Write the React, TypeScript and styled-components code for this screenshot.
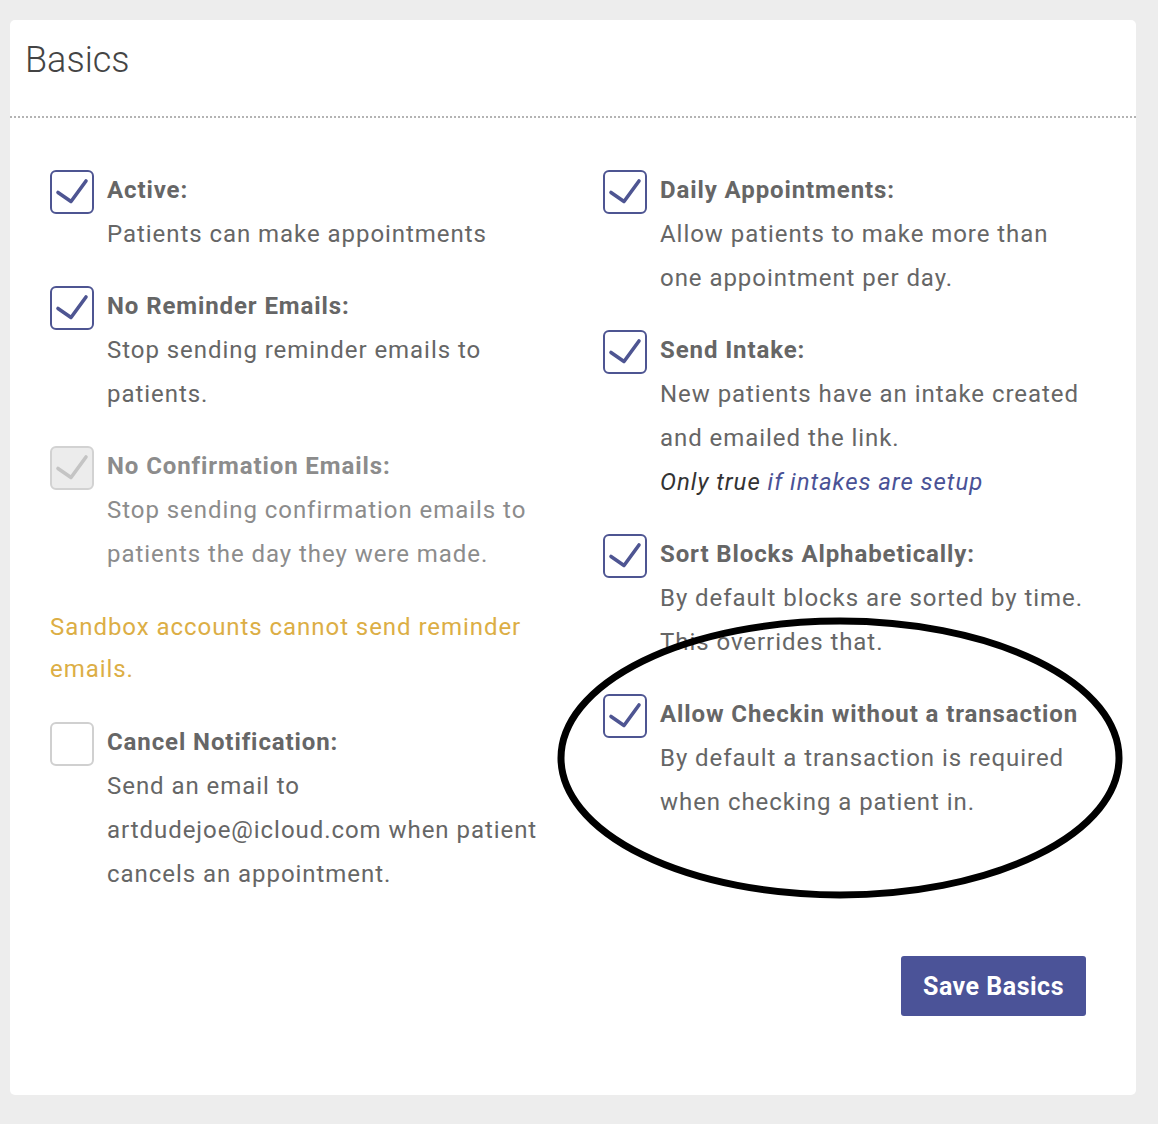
import React from 'react';
import styled, { createGlobalStyle } from 'styled-components';

const GlobalStyle = createGlobalStyle`
    html, body {
        margin: 0;
        padding: 0;
        background: #ededed;
        font-family: Roboto, "Noto Sans", "Liberation Sans", sans-serif;
    }
`;

const Page = styled.div`
    position: relative;
    width: 1158px;
    height: 1124px;
    padding: 20px 0 0 10px;
    box-sizing: border-box;
`;

const Card = styled.div`
    width: 1126px;
    height: 1075px;
    background: #fff;
    border-radius: 5px;
    box-sizing: border-box;
    display: flex;
    flex-direction: column;
`;

const Header = styled.header`
    height: 98px;
    padding: 0 15px;
    display: flex;
    align-items: center;
    border-bottom: 2px dotted #b4b4b4;
    box-sizing: border-box;
`;

const Title = styled.h2`
    margin: 0 0 16px;
    font-size: 36px;
    font-weight: 300;
    color: #444;
`;

const Body = styled.div`
    padding: 50px 40px 0;
    display: grid;
    grid-template-columns: 493px 493px;
    column-gap: 60px;
    align-items: start;
`;

const Column = styled.div`
    display: flex;
    flex-direction: column;
    gap: 28px;
`;

const Item = styled.div`
    display: flex;
    align-items: flex-start;
    gap: 13px;
`;

const Box = styled.div<{ $checked: boolean; $disabled?: boolean }>`
    flex: none;
    width: 44px;
    height: 44px;
    margin-top: 2px;
    box-sizing: border-box;
    border-radius: 6px;
    border: 2px solid ${(p) => (p.$disabled ? '#d2d2d2' : p.$checked ? '#4e5592' : '#d0d0d0')};
    background: ${(p) => (p.$disabled ? '#ececec' : '#fff')};
    display: flex;
    align-items: center;
    justify-content: center;
`;

const Text = styled.div<{ $disabled?: boolean }>`
    font-size: 24px;
    line-height: 44px;
    letter-spacing: 0.95px;
    color: ${(p) => (p.$disabled ? '#8c8c8c' : '#666')};
`;

const Label = styled.div`
    font-weight: 700;
    white-space: nowrap;
    letter-spacing: 0.9px;
`;

const Note = styled.div`
    font-style: italic;
    color: #333;
`;

const NoteLink = styled.a`
    color: #4a5296;
    text-decoration: none;
`;

const Warning = styled.div`
    font-size: 24px;
    line-height: 42px;
    letter-spacing: 0.95px;
    color: #dcae45;
    margin: 2px 0 2px;
`;

const Footer = styled.div`
    margin-top: auto;
    padding: 0 50px 79px;
    display: flex;
    justify-content: flex-end;
`;

const SaveButton = styled.button`
    width: 185px;
    height: 60px;
    border: none;
    border-radius: 3px;
    background: #4b5398;
    color: #fff;
    font-family: Roboto, "Noto Sans", "Liberation Sans", sans-serif;
    font-size: 25px;
    font-weight: 700;
    letter-spacing: 0.5px;
    cursor: pointer;
`;

const Annotation = styled.svg`
    position: absolute;
    left: 0;
    top: 0;
    pointer-events: none;
`;

function Check({ checked, disabled }: { checked: boolean; disabled?: boolean }) {
    return (
        <Box $checked={checked} $disabled={disabled}>
            {checked && (
                <svg width="44" height="44" viewBox="0 0 44 44" style={{ margin: -2 }}>
                    <path
                        d="M8 22.5 L21 31.5 L36 11"
                        fill="none"
                        stroke={disabled ? '#c4c4c4' : '#4e5592'}
                        strokeWidth="3.6"
                        strokeLinecap="round"
                        strokeLinejoin="round"
                    />
                </svg>
            )}
        </Box>
    );
}

type Setting = {
    label: string;
    text: string;
    checked: boolean;
    disabled?: boolean;
    note?: boolean;
};

function SettingItem({ label, text, checked, disabled, note }: Setting) {
    return (
        <Item>
            <Check checked={checked} disabled={disabled} />
            <Text $disabled={disabled}>
                <Label>{label}</Label>
                <div>{text}</div>
                {note && (
                    <Note>
                        Only true <NoteLink href="#">if intakes are setup</NoteLink>
                    </Note>
                )}
            </Text>
        </Item>
    );
}

const left: Setting[] = [
    { label: 'Active:', text: 'Patients can make appointments', checked: true },
    { label: 'No Reminder Emails:', text: 'Stop sending reminder emails to patients.', checked: true },
    {
        label: 'No Confirmation Emails:',
        text: 'Stop sending confirmation emails to patients the day they were made.',
        checked: true,
        disabled: true,
    },
];

const right: Setting[] = [
    { label: 'Daily Appointments:', text: 'Allow patients to make more than one appointment per day.', checked: true },
    { label: 'Send Intake:', text: 'New patients have an intake created and emailed the link.', checked: true, note: true },
    { label: 'Sort Blocks Alphabetically:', text: 'By default blocks are sorted by time. This overrides that.', checked: true },
    {
        label: 'Allow Checkin without a transaction',
        text: 'By default a transaction is required when checking a patient in.',
        checked: true,
    },
];

export default function App() {
    return (
        <Page>
            <GlobalStyle />
            <Card>
                <Header>
                    <Title>Basics</Title>
                </Header>
                <Body>
                    <Column>
                        {left.map((s) => (
                            <SettingItem key={s.label} {...s} />
                        ))}
                        <Warning>Sandbox accounts cannot send reminder emails.</Warning>
                        <SettingItem
                            label="Cancel Notification:"
                            text="Send an email to artdudejoe@icloud.com when patient cancels an appointment."
                            checked={false}
                        />
                    </Column>
                    <Column>
                        {right.map((s) => (
                            <SettingItem key={s.label} {...s} />
                        ))}
                    </Column>
                </Body>
                <Footer>
                    <SaveButton>Save Basics</SaveButton>
                </Footer>
            </Card>
            <Annotation width="1158" height="1124">
                <ellipse cx="840" cy="758" rx="279" ry="137" fill="none" stroke="#000" strokeWidth="7" />
            </Annotation>
        </Page>
    );
}
